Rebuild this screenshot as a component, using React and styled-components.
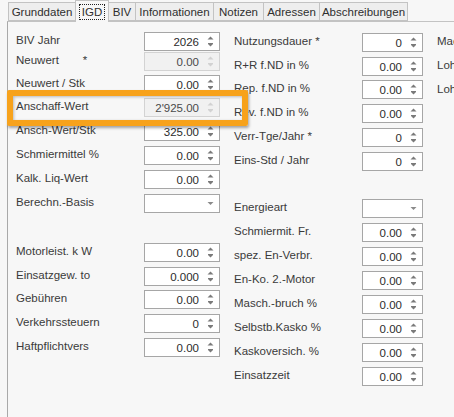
import styled, { createGlobalStyle } from "styled-components";

const GlobalStyle = createGlobalStyle`
  html, body {
    margin: 0;
    background: #f7f7f7;
    overflow: hidden;
  }
  body {
    font-family: "Liberation Sans", Arial, sans-serif;
    font-size: 11px;
    color: #3a3a3a;
  }
`

const Page = styled.div`
  position: relative;
  width: 454px;
  height: 417px;
  overflow: hidden;
`

const TabStrip = styled.div`
  display: flex;
  align-items: flex-end;
  height: 21px;
  padding-left: 9px;
`

const Tab = styled.div`
  box-sizing: border-box;
  width: ${p => p.$w}px;
  height: ${p => (p.$active ? "22px" : "19px")};
  margin-bottom: ${p => (p.$active ? "-1px" : "0")};
  margin-left: -1px;
  display: flex;
  align-items: center;
  justify-content: center;
  background: ${p => (p.$active ? "#f7f7f7" : "#eeeeee")};
  border: 1px solid #c3c3c3;
  border-bottom: ${p => (p.$active ? "none" : "1px solid #c3c3c3")};
  color: #2f2f2f;
  font-size: 11.5px;
  white-space: nowrap;
  position: relative;
  z-index: ${p => (p.$active ? 2 : 1)};
`

const FocusText = styled.span`
  outline: 1px dotted #222;
  outline-offset: 1px;
  padding: 0 1px;
`

const Panel = styled.div`
  position: relative;
  z-index: 1;
  margin-left: 7px;
  height: 396px;
  border-left: 1px solid #a9a9a9;
  border-top: 1px solid #c3c3c3;
  padding: 10px 0 0 8px;
  display: flex;
  gap: 14px;
  align-items: flex-start;
`

const Column = styled.div`
  display: flex;
  flex-direction: column;
  flex-shrink: 0;
  padding-top: ${p => p.$top || 0}px;
`

const Row = styled.div`
  display: flex;
  align-items: flex-start;
  height: 19px;
  margin-top: ${p => (p.$gap ?? 5)}px;
  &:first-child {
    margin-top: 0;
  }
`

const Label = styled.div`
  width: 128px;
  line-height: 16px;
  font-size: 11.5px;
  white-space: nowrap;
  color: #3a3a3a;
`

const Star = styled.span`
  margin-left: 24px;
`

const Field = styled.div`
  box-sizing: border-box;
  width: ${p => p.$w}px;
  height: 19px;
  display: flex;
  align-items: center;
  justify-content: flex-end;
  padding-right: 5px;
  background: ${p => (p.$disabled ? "#f1f1f1" : "#ffffff")};
  border: 1px solid ${p => (p.$disabled ? "#d3d3d3" : "#a6a6a6")};
  color: ${p => (p.$disabled ? "#4a4a4a" : "#2b2b2b")};
  font-size: 11.5px;
`

const Value = styled.span`
  margin-right: 8px;
`

const Spin = ({ disabled }) => {
  const c = disabled ? "#d2d2d2" : "#7a7a7a";
  return (
    <svg width="7" height="13" viewBox="0 0 7 13">
      <polygon points="0.5,4.5 3.5,1.5 6.5,4.5" fill={c} />
      <rect x="1" y="8" width="5" height="1" fill={c} />
      <polygon points="1,9 3.5,11.5 6,9" fill={c} />
    </svg>
  );
};

const Caret = () => (
  <svg width="7" height="5" viewBox="0 0 7 5">
    <polygon points="0.5,1 3.5,4 6.5,1" fill="#8a8a8a" />
  </svg>
);

const SpinBox = ({ w, value, disabled }) => (
  <Field $w={w} $disabled={disabled}>
    <Value>{value}</Value>
    <Spin disabled={disabled} />
  </Field>
);

const SelectBox = ({ w }) => (
  <Field $w={w}>
    <Caret />
  </Field>
);

const Highlight = styled.div`
  position: absolute;
  left: 7px;
  top: 90px;
  width: 241px;
  height: 36px;
  box-sizing: border-box;
  border: 6px solid #f7a21b;
  border-radius: 2px;
  box-shadow: 1px 2px 3px rgba(0, 0, 0, 0.35), inset 1px 1px 3px rgba(0, 0, 0, 0.25);
  z-index: 5;
  pointer-events: none;
`

// tab captions with their widths in the strip
const tabs = [
  ["Grunddaten", 68],
  ["IGD", 34],
  ["BIV", 28],
  ["Informationen", 79],
  ["Notizen", 51],
  ["Adressen", 57],
  ["Abschreibungen", 89],
];

const leftRows = [
  { label: "BIV Jahr", value: "2026" },
  { label: "Neuwert", star: true, value: "0.00", disabled: true, gap: 1 },
  { label: "Neuwert / Stk", value: "0.00", gap: 4 },
  { label: "Anschaff-Wert", value: "2'925.00", disabled: true, gap: 4 },
  { label: "Ansch-Wert/Stk", value: "325.00" },
  { label: "Schmiermittel %", value: "0.00" },
  { label: "Kalk. Liq-Wert", value: "0.00" },
  { label: "Berechn.-Basis", select: true },
  { label: "Motorleist. k W", value: "0.00", gap: 30 },
  { label: "Einsatzgew. to", value: "0.000" },
  { label: "Gebühren", value: "0.00", gap: 4 },
  { label: "Verkehrssteuern", value: "0" },
  { label: "Haftpflichtvers", value: "0.00" },
];

const rightRows = [
  { label: "Nutzungsdauer *", value: "0" },
  { label: "R+R f.ND in %", value: "0.00" },
  { label: "Rep. f.ND in %", value: "0.00", gap: 4 },
  { label: "Rev. f.ND in %", value: "0.00" },
  { label: "Verr-Tge/Jahr *", value: "0" },
  { label: "Eins-Std / Jahr", value: "0" },
  { label: "Energieart", select: true, gap: 28 },
  { label: "Schmiermit. Fr.", value: "0.00" },
  { label: "spez. En-Verbr.", value: "0.00" },
  { label: "En-Ko. 2.-Motor", value: "0.00" },
  { label: "Masch.-bruch %", value: "0.00" },
  { label: "Selbstb.Kasko %", value: "0.00" },
  { label: "Kaskoversich. %", value: "0.00" },
  { label: "Einsatzzeit", value: "0.00" },
];

const extraRows = ["Mac", "Loh", "Loh"];

const FormColumn = ({ rows, w, top }) => (
  <Column $top={top}>
    {rows.map((r, i) => (
      <Row key={i} $gap={r.gap}>
        <Label>
          {r.label}
          {r.star && <Star>*</Star>}
        </Label>
        {r.select ? (
          <SelectBox w={w} />
        ) : (
          <SpinBox w={w} value={r.value} disabled={r.disabled} />
        )}
      </Row>
    ))}
  </Column>
);

export default function App() {
  return (
    <Page>
      <GlobalStyle />
      <TabStrip>
        {tabs.map(([t, w]) => (
          <Tab key={t} $w={w} $active={t === "IGD"}>
            {t === "IGD" ? <FocusText>{t}</FocusText> : t}
          </Tab>
        ))}
      </TabStrip>
      <Panel>
        <FormColumn rows={leftRows} w={76} />
        <FormColumn rows={rightRows} w={61} top={1} />
        <Column $top={1}>
          {extraRows.map((t, i) => (
            <Row key={i}>
              <Label>{t}</Label>
            </Row>
          ))}
        </Column>
      </Panel>
      <Highlight />
    </Page>
  );
}
